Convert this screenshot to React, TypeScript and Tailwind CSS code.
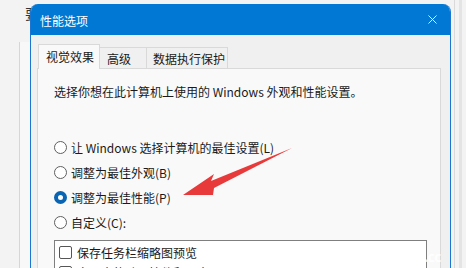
import { X } from 'lucide-react'

const font = { fontFamily: '"Noto Sans CJK SC", "Noto Sans", sans-serif' }

function Radio({ label, checked }: { label: string; checked?: boolean }) {
  return (
    <div className="flex items-center h-[25px]">
      {checked ? (
        <span className="w-[13px] h-[13px] rounded-full border-[4px] border-[#0a64b4] bg-white shrink-0" />
      ) : (
        <span className="w-[13px] h-[13px] rounded-full border border-[#5f5f5f] bg-white shrink-0" />
      )}
      <span className="ml-[4px] text-[12px] text-[#1a1a1a] leading-[16px] whitespace-nowrap">{label}</span>
    </div>
  )
}

export default function App() {
  return (
    <div className="relative w-[466px] h-[268px] overflow-hidden bg-[#f3f3f3]" style={font}>
      {/* underlying window behind the dialog */}
      <div className="absolute left-[25px] top-[6px] text-[14px] text-[#333] leading-none">要</div>
      <div className="absolute left-[19px] top-[42px] w-px h-[230px] bg-[#d6d6d6]" />
      <div className="absolute left-[20px] top-[42px] w-[12px] h-[230px] bg-[#f8f8f8]" />
      <div className="absolute left-[454px] top-0 w-px h-[268px] bg-[#dadada]" />
      <div className="absolute left-[459px] top-0 w-[3px] h-[268px] bg-[#e4e4e4]" />

      {/* dialog */}
      <div className="absolute left-[30px] top-[4px] w-[421px] h-[300px] flex flex-col rounded-t-[8px] overflow-hidden border-x border-[#1976d2] bg-[#f0f0f0]">
        <div className="h-[31px] bg-[#0078d4] flex items-center justify-between pl-[9px] pr-[10px] pt-[2px] shrink-0">
          <span className="text-[12px] text-white leading-[16px]">性能选项</span>
          <X className="w-[15px] h-[15px] text-white -mt-[2px]" strokeWidth={1.4} />
        </div>

        <div className="flex-1 pt-[9px] pl-[6px] pr-[9px]">
          <div className="flex items-end h-[24px] pl-[1px]">
            <div className="h-[25px] w-[62px] bg-[#f9f9f9] border border-b-0 border-[#d9d9d9] flex items-center pl-[7px] text-[12px] leading-[16px] text-[#1a1a1a] relative z-10 -mb-px">
              视觉效果
            </div>
            <div className="h-[21px] w-[47px] border border-l-0 border-b-0 border-[#d9d9d9] flex items-center pl-[7px] pt-[2px] text-[12px] leading-[16px] text-[#1a1a1a]">
              高级
            </div>
            <div className="h-[21px] w-[81px] border border-l-0 border-b-0 border-[#d9d9d9] flex items-center pl-[6px] pt-[2px] text-[12px] leading-[16px] text-[#1a1a1a] whitespace-nowrap">
              数据执行保护
            </div>
          </div>

          <div className="h-[240px] bg-[#f9f9f9] border border-[#d9d9d9] pl-[16px] pt-[14px]">
            <div className="text-[12px] text-[#1a1a1a] leading-[18px] whitespace-nowrap">
              选择你想在此计算机上使用的 Windows 外观和性能设置。
            </div>
            <div className="mt-[34px] flex flex-col">
              <Radio label="让 Windows 选择计算机的最佳设置(L)" />
              <Radio label="调整为最佳外观(B)" />
              <Radio label="调整为最佳性能(P)" checked />
              <Radio label="自定义(C):" />
            </div>
            <div className="mt-[5px] w-[373px] h-[80px] bg-white border border-[#7f7f7f] pl-[4px] pt-[4px]">
              <div className="flex items-center h-[15px]">
                <span className="w-[13px] h-[13px] rounded-[2px] border border-[#555] bg-white shrink-0" />
                <span className="ml-[5px] text-[12px] text-[#1a1a1a] leading-[16px]">保存任务栏缩略图预览</span>
              </div>
              <div className="flex items-center h-[15px] mt-[5px]">
                <span className="w-[13px] h-[13px] rounded-[2px] border border-[#555] bg-white shrink-0" />
                <span className="ml-[5px] text-[12px] text-[#1a1a1a] leading-[16px]">窗口内的动画控件和元素</span>
              </div>
            </div>
          </div>
        </div>
      </div>

      {/* red annotation arrow */}
      <svg className="absolute left-0 top-0" width="466" height="268" viewBox="0 0 466 268">
        <polygon
          points="183,195 214,174 211,181 292,148 214,188 213,195"
          fill="#e83a3a"
        />
      </svg>

      <div className="absolute left-[424px] top-[250px] text-[13px] font-bold text-white/80 leading-none">.cc</div>
    </div>
  )
}
